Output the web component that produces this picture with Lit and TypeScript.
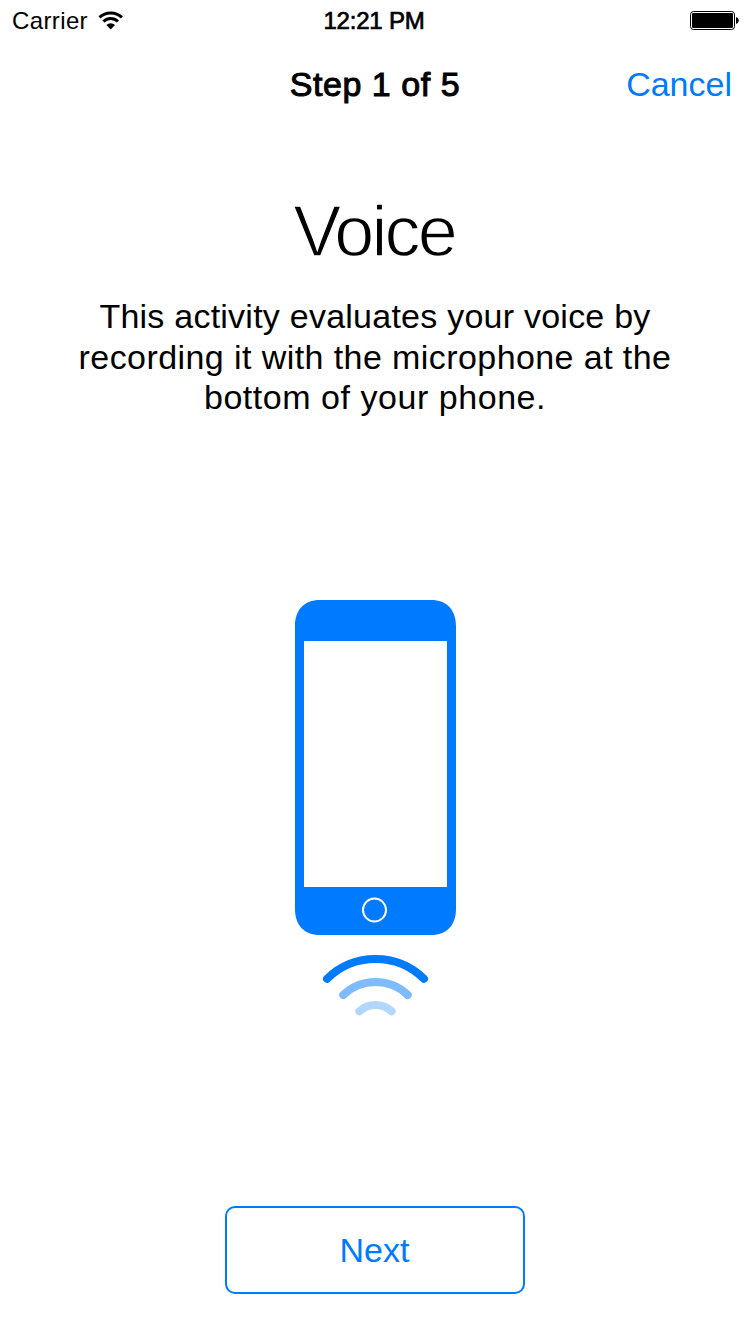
import { LitElement, html, css, svg } from "lit";
import { customElement } from "lit/decorators.js";

const LINES = [
  { text: "This activity evaluates your voice by", spacing: 0.24 },
  { text: "recording it with the microphone at the", spacing: 0.42 },
  { text: "bottom of your phone.", spacing: 0.54 },
];

const WAVES = [
  { d: "M327 978.8A69.4 69.4 0 0 1 424 978.8", opacity: 1 },
  { d: "M343.2 995A46.5 46.5 0 0 1 407.8 995", opacity: 0.5 },
  { d: "M359.4 1011.2A24 24 0 0 1 391.6 1011.2", opacity: 0.3 },
];

@customElement("app-root")
export class AppRoot extends LitElement {
  static styles = css`
    :host {
      display: flex;
      flex-direction: column;
      align-items: center;
      box-sizing: border-box;
      width: 750px;
      height: 1334px;
      overflow: hidden;
      background: #fff;
      color: #000;
      font-family: "Liberation Sans", Arial, sans-serif;
    }
    svg { display: block; }
    .status, .nav {
      display: grid;
      grid-template-columns: 1fr auto 1fr;
      align-items: center;
      width: 100%;
      box-sizing: border-box;
      white-space: nowrap;
    }
    .status { height: 40px; padding: 0 11px; font-size: 24px; line-height: 40px; }
    .carrier { display: flex; align-items: center; gap: 10px; }
    .carrier-name { letter-spacing: 0.38px; padding: 1px 0 0 1px; }
    .time { -webkit-text-stroke: 0.7px #000; padding: 1px 2px 0 0; letter-spacing: -0.2px; }
    .battery { justify-self: end; }
    .nav { height: 88px; padding: 0 17px; font-size: 34px; line-height: 88px; }
    .title { grid-column: 2; -webkit-text-stroke: 1px #000; letter-spacing: 0.55px; }
    .cancel { justify-self: end; color: #007aff; padding-right: 1px; }
    .heading {
      margin: 63px 0 0;
      font-size: 72px;
      line-height: 80px;
      font-weight: 400;
      -webkit-text-stroke: 1.4px #fff;
      letter-spacing: -2.9px;
      padding-right: 2px;
      box-sizing: border-box;
    }
    .text { margin: 25px 0 0; font-size: 34px; line-height: 40.6px; text-align: center; white-space: nowrap; }
    .line { display: block; }
    .phone { margin-top: 182px; }
    .next {
      margin: 186px 0 0;
      width: 300px;
      height: 88px;
      box-sizing: border-box;
      border: 2px solid #007aff;
      border-radius: 10px;
      background: none;
      color: #007aff;
      font: 34px "Liberation Sans", Arial, sans-serif;
      padding: 2px 1px 0 0;
    }
  `;

  render() {
    return html`
      <div class="status">
        <div class="carrier">
          <span class="carrier-name">Carrier</span>
          <svg width="26" height="20" viewBox="98 11 26 20">
            <g fill="none" stroke="#000" stroke-width="3">
              <path d="M99.5 17.3A16.4 16.4 0 0 1 121.9 17.3" />
              <path d="M103.4 21.5A10.5 10.5 0 0 1 118 21.5" />
            </g>
            <path d="M106.4 25A6.2 6.2 0 0 1 115 25L110.7 29.6Z" />
          </svg>
        </div>
        <span class="time">12:21 PM</span>
        <svg class="battery" width="49" height="20" viewBox="690 11 49 20">
          <rect x="690.5" y="11.5" width="44" height="18" rx="3" fill="none" stroke="#000" />
          <rect x="692" y="13" width="41" height="15" rx="1.3" />
          <path d="M736 17.2C739.6 17.2 739.6 23.8 736 23.8Z" />
        </svg>
      </div>
      <div class="nav">
        <span class="title">Step 1 of 5</span>
        <span class="cancel">Cancel</span>
      </div>
      <h1 class="heading">Voice</h1>
      <p class="text">${LINES.map((l) => html`<span class="line" style="letter-spacing:${l.spacing}px">${l.text}</span>`)}</p>
      <svg class="phone" width="160" height="420" viewBox="295 600 160 420" overflow="visible">
        <path fill="#007aff" fill-rule="evenodd" d="M320 600H431C447 600 456 610 456 626V909C456 925 447 935 431 935H320C304 935 295 925 295 909V626C295 610 304 600 320 600ZM304 641V887H447V641Z" />
        <circle cx="374.5" cy="910" r="11.5" fill="none" stroke="#fff" stroke-width="2" />
        ${WAVES.map((w) => svg`<path d=${w.d} stroke-opacity=${w.opacity} fill="none" stroke="#007aff" stroke-width="8" stroke-linecap="round" />`)}
      </svg>
      <button class="next">Next</button>
    `;
  }
}
